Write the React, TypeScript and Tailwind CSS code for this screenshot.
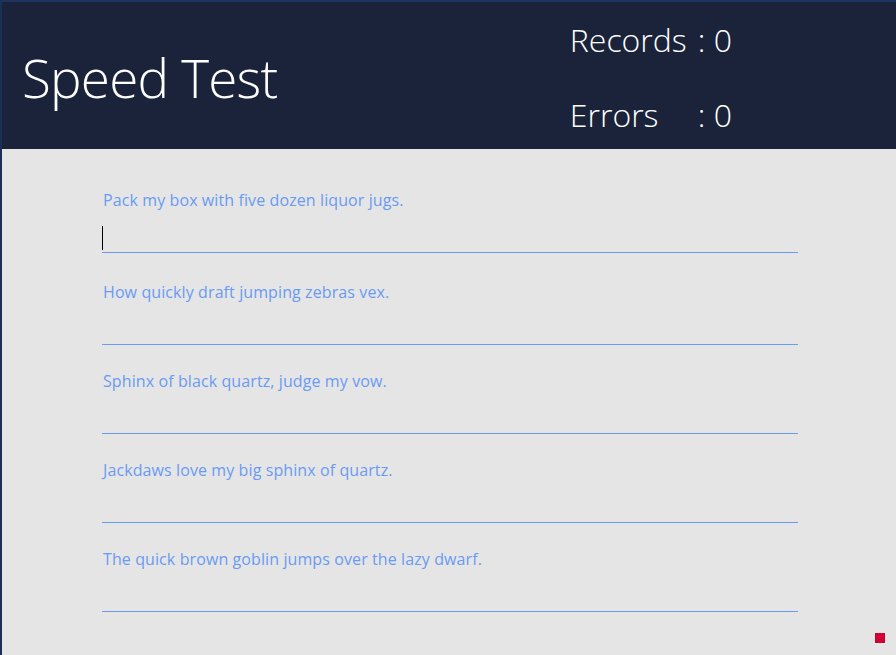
const SENTENCES = [
  "Pack my box with five dozen liquor jugs.",
  "How quickly draft jumping zebras vex.",
  "Sphinx of black quartz, judge my vow.",
  "Jackdaws love my big sphinx of quartz.",
  "The quick brown goblin jumps over the lazy dwarf.",
];

export default function App() {
  return (
    <div className="relative w-[896px] h-[655px] flex flex-col bg-[#e5e5e5] border-l-2 border-[#1b2f57] overflow-hidden font-['Open_Sans',sans-serif]">
      {/* Header */}
      <header className="h-[149px] shrink-0 bg-[#1a2339] border-t-2 border-[#1d3462] flex text-white font-light">
        <h1 className="pl-[20px] pt-[49px] text-[53px] leading-none tracking-[-0.8px]">Speed Test</h1>
        <div className="ml-auto mr-[164px] pt-[18px] grid grid-cols-[128px_auto] gap-y-[20px] text-[32px] leading-[40px]">
          <span>Records</span>
          <span>: 0</span>
          <span>Errors</span>
          <span>: 0</span>
        </div>
      </header>

      {/* Inputs */}
      <main className="flex flex-col pl-[100px] pt-[40px]">
        {SENTENCES.map((s, i) => (
          <div key={i} className={`w-[696px] flex flex-col shrink-0 ${i === 0 ? "h-[92px]" : "h-[89px]"}`}>
            <label className="text-[#6a9bf4] text-[16px] leading-[22px] pl-px tracking-[0.1px]">{s}</label>
            <div className="mt-[12px] h-[30px] border-b border-[#6a9bf4] flex items-end">
              {i === 0 && <div className="w-px h-[24px] bg-black mb-[2px]" />}
            </div>
          </div>
        ))}
      </main>

      {/* status marker */}
      <div className="absolute bottom-[12px] right-[11px] w-[10px] h-[10px] bg-[#d10034]" />
    </div>
  );
}
